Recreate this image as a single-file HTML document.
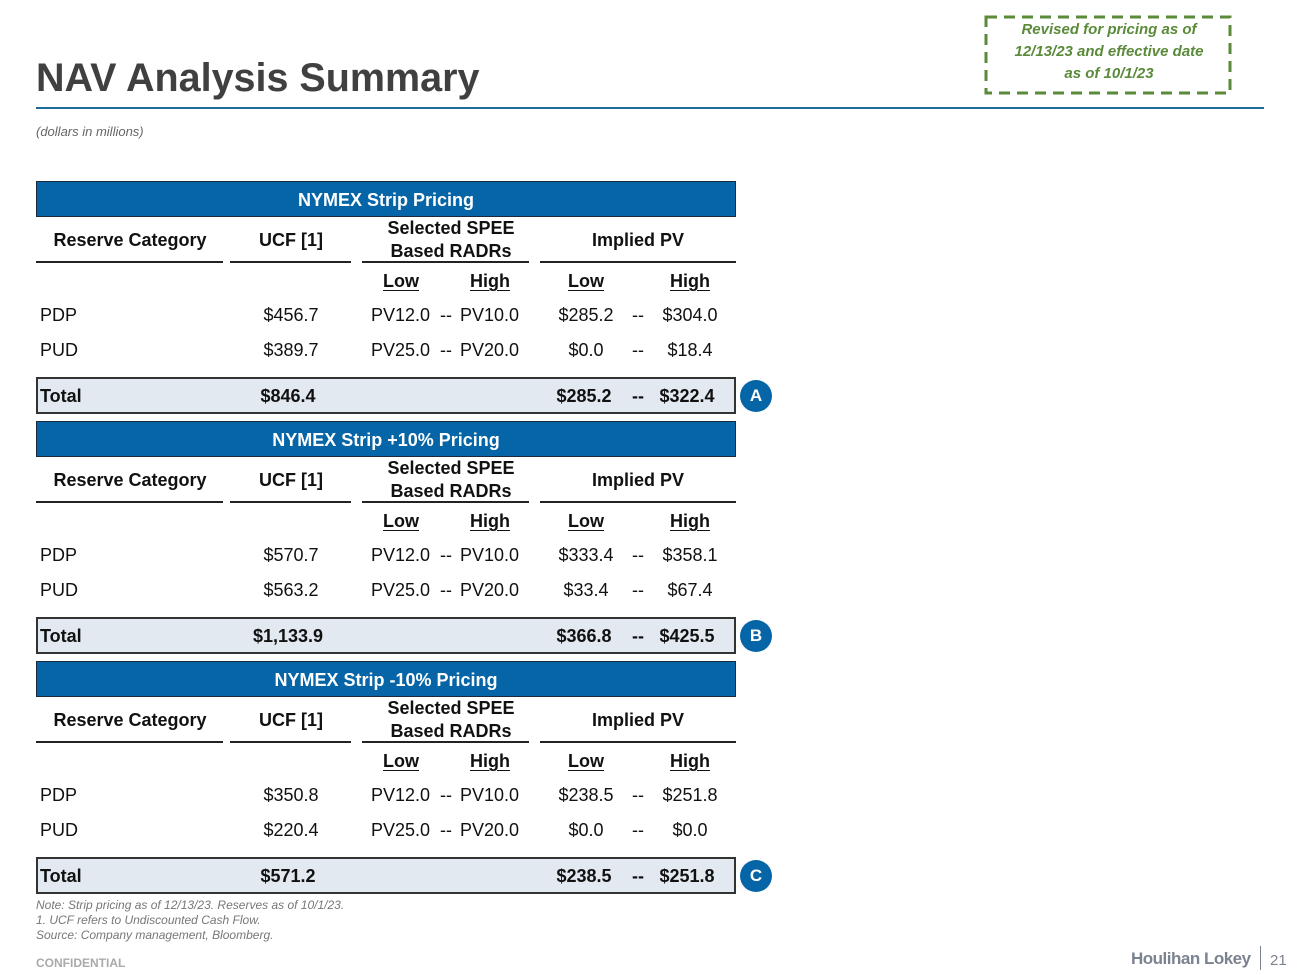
<!DOCTYPE html><html><head><meta charset="utf-8"><style>
body{margin:0;width:1300px;height:975px;background:#fff;position:relative;overflow:hidden;font-family:"Liberation Sans",Arial,sans-serif;color:#111}
.a{position:absolute;white-space:nowrap;line-height:20px;font-size:18px}
.c{width:200px;text-align:center}
.b{font-weight:bold}
.u{text-decoration:underline;text-underline-offset:3px}
.bar{position:absolute;left:36px;width:698px;height:34px;background:#0565a7;border:1px solid #1a2a3a;color:#fff;font-weight:bold;font-size:18px;text-align:center;line-height:36px}
.ln{position:absolute;height:2px;background:#222}
.tot{position:absolute;left:36px;width:696px;height:33px;background:#e2e9f0;border:2px solid #333}
.circ{position:absolute;width:32px;height:32px;border-radius:50%;background:#0565a7;color:#fff;font-weight:bold;font-size:17px;text-align:center;line-height:32px}
</style></head><body>
<div class="a b" style="left:36px;top:54px;font-size:39.5px;line-height:48px;color:#404040">NAV Analysis Summary</div>
<div style="position:absolute;left:36px;top:107px;width:1228px;height:2px;background:#1f6a9a"></div>
<div class="a" style="left:36px;top:122px;font-size:13px;font-style:italic;color:#666">(dollars in millions)</div>
<svg style="position:absolute;left:984px;top:15px" width="248" height="80"><rect x="2" y="2" width="244" height="76" fill="none" stroke="#5a8a3a" stroke-width="3" stroke-dasharray="11,7"/></svg>
<div class="a" style="left:986px;top:19px;width:246px;text-align:center;font-size:15px;line-height:22px;font-style:italic;font-weight:bold;color:#5a8a3a">Revised for pricing as of<br>12/13/23 and effective date<br>as of 10/1/23</div>

<div id="blocks"></div>
<script>
var data=[
["NYMEX Strip Pricing",["$456.7","PV12.0","PV10.0","$285.2","$304.0"],["$389.7","PV25.0","PV20.0","$0.0","$18.4"],["$846.4","$285.2","$322.4"],"A"],
["NYMEX Strip +10% Pricing",["$570.7","PV12.0","PV10.0","$333.4","$358.1"],["$563.2","PV25.0","PV20.0","$33.4","$67.4"],["$1,133.9","$366.8","$425.5"],"B"],
["NYMEX Strip -10% Pricing",["$350.8","PV12.0","PV10.0","$238.5","$251.8"],["$220.4","PV25.0","PV20.0","$0.0","$0.0"],["$571.2","$238.5","$251.8"],"C"]];
var h="";
data.forEach(function(d,i){var o=i*240;
function t(x,y,s,cls){return '<div class="a c '+(cls||'')+'" style="left:'+(x-100)+'px;top:'+(y+o-10)+'px">'+s+'</div>';}
function l(x,y,s,cls){return '<div class="a '+(cls||'')+'" style="left:'+x+'px;top:'+(y+o-10)+'px">'+s+'</div>';}
h+='<div class="bar" style="top:'+(181+o)+'px">'+d[0]+'</div>';
h+=t(130,240,"Reserve Category","b")+t(291,240,"UCF [1]","b")+t(451,228,"Selected SPEE","b")+t(451,251,"Based RADRs","b")+t(638,240,"Implied PV","b");
[[36,223],[230,351],[362,529],[540,736]].forEach(function(s){h+='<div class="ln" style="left:'+s[0]+'px;width:'+(s[1]-s[0])+'px;top:'+(261+o)+'px"></div>';});
h+=t(401,281,"Low","b u")+t(490,281,"High","b u")+t(586,281,"Low","b u")+t(690,281,"High","b u");
[[d[1],"PDP",315],[d[2],"PUD",350]].forEach(function(r){var y=r[2],v=r[0];
h+=l(40,y,r[1])+t(291,y,v[0])+l(371,y,v[1])+t(446,y,"--")+l(460,y,v[2])+t(586,y,v[3])+t(638,y,"--")+t(690,y,v[4]);});
h+='<div class="tot" style="top:'+(377+o)+'px"></div>';
h+=l(40,396,"Total","b")+t(288,396,d[3][0],"b")+t(584,396,d[3][1],"b")+t(638,396,"--","b")+t(687,396,d[3][2],"b");
h+='<div class="circ" style="left:740px;top:'+(380+o)+'px">'+d[4]+'</div>';
});
document.getElementById("blocks").innerHTML=h;
</script>

<div class="a" style="left:36px;top:898px;font-size:12px;line-height:15px;font-style:italic;color:#777">Note: Strip pricing as of 12/13/23. Reserves as of 10/1/23.<br>1. UCF refers to Undiscounted Cash Flow.<br>Source: Company management, Bloomberg.</div>
<div class="a b" style="left:36px;top:955px;font-size:12px;color:#aaa;line-height:16px">CONFIDENTIAL</div>
<div class="a b" style="left:1131px;top:949px;font-size:17px;color:#7b8290;letter-spacing:-0.5px">Houlihan Lokey</div>
<div style="position:absolute;left:1260px;top:946px;width:1px;height:24px;background:#7b8290"></div>
<div class="a" style="left:1270px;top:951px;font-size:15px;color:#7b8290">21</div>
</body></html>
